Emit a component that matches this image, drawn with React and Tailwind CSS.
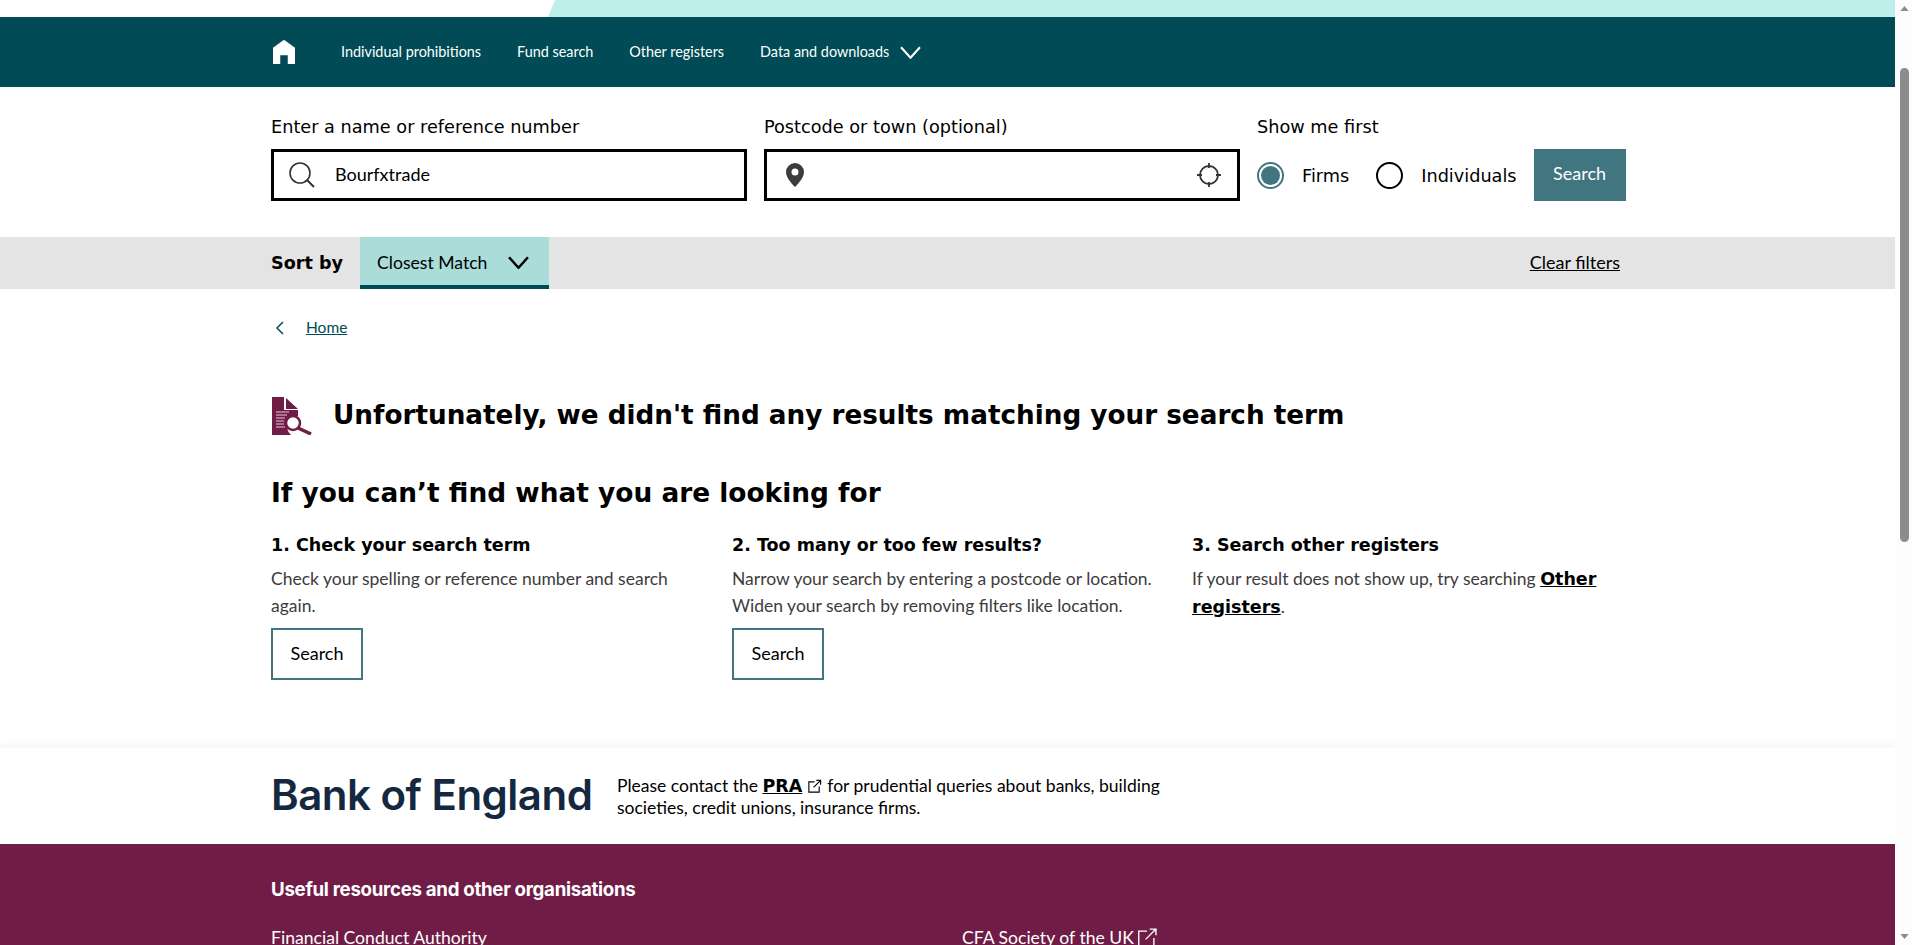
import React from "react";

const dv = "font-['DejaVu_Sans',sans-serif]";
const lato = "font-['Lato',sans-serif]";

const Chevron = ({ className, color = "currentColor", sw = 2 }) => (
  <svg viewBox="0 0 20 12" className={className} fill="none" stroke={color} strokeWidth={sw}>
    <path d="M1 1l9 10 9-10" />
  </svg>
);

const External = ({ className, sw = 1.2 }) => (
  <svg viewBox="0 0 16 16" className={className} fill="none" stroke="currentColor" strokeWidth={sw}>
    <path d="M8 3H2v11h11V8M7 9l7.500-7.500M10 1.500h4.500V6" />
  </svg>
);

const Radio = ({ checked }) => (
  <span className={`flex h-[27px] w-[27px] shrink-0 items-center justify-center rounded-full border-2 ${checked ? "border-[#41757f]" : "border-black"}`}>
    {checked && <span className="h-[19px] w-[19px] rounded-full bg-[#41757f]" />}
  </span>
);

const OutlineButton = () => (
  <button className={`flex h-[52px] w-[92px] items-center justify-center border-2 border-[#41757f] bg-white pb-[2px] text-[18px] text-black ${lato}`}>Search</button>
);

export default function App() {
  return (
    <div className={`flex h-[945px] w-full overflow-hidden bg-white ${lato}`}>
      <div className="min-w-0 flex-1">
        {/* top strip */}
        <div className="flex h-[17px] justify-end">
          <div className="h-full w-[1347px] bg-[#bdefeb] [clip-path:polygon(7px_0,100%_0,100%_100%,0_100%)]" />
        </div>
        {/* nav */}
        <nav className="flex h-[70px] items-center bg-[#004b55] pl-[273px] text-white">
          <svg viewBox="0 0 22 24" className="mr-[46px] h-[24px] w-[22px] shrink-0" fill="#fff">
            <path d="M11 0L22 8V24H15V15H7V24H0V8Z" stroke="#fff" strokeWidth="0.500" strokeLinejoin="round" />
          </svg>
          <div className="flex items-center gap-[36px] text-[14.4px]">
            <span>Individual prohibitions</span>
            <span>Fund search</span>
            <span>Other registers</span>
            <span className="flex items-center gap-[11px]">
              Data and downloads
              <Chevron className="mt-[2px] h-[13px] w-[21px]" />
            </span>
          </div>
        </nav>
        {/* search */}
        <div className={`flex h-[150px] gap-[17px] pl-[271px] pt-[30px] text-black ${dv}`}>
          <div className="w-[476px]">
            <div className="h-[32px] text-[17.7px] leading-[21px]">Enter a name or reference number</div>
            <div className="flex h-[52px] items-center border-[3px] border-black pl-[15px]">
              <svg viewBox="0 0 26 26" className="h-[26px] w-[26px]" fill="none" stroke="#333" strokeWidth="1.600">
                <circle cx="11" cy="11" r="10" />
                <path d="M18 18l7 7" strokeWidth="2" />
              </svg>
              <span className={`ml-[20px] pb-[2px] text-[18px] ${lato}`}>Bourfxtrade</span>
            </div>
          </div>
          <div className="w-[476px]">
            <div className="h-[32px] text-[17.7px] leading-[21px]">Postcode or town (optional)</div>
            <div className="flex h-[52px] items-center justify-between border-[3px] border-black pl-[19px] pr-[16px]">
              <svg viewBox="0 0 18 24" className="h-[24px] w-[18px]" fill="#3c3c3c">
                <path fillRule="evenodd" d="M9 0a9 9 0 0 1 9 9c0 5-5 11-9 15-4-4-9-10-9-15a9 9 0 0 1 9-9zm0 5.500a3.500 3.500 0 1 0 0 7 3.500 3.500 0 0 0 0-7z" />
              </svg>
              <svg viewBox="0 0 24 24" className="h-[24px] w-[24px]" fill="none" stroke="#333" strokeWidth="1.800">
                <circle cx="12" cy="12" r="9" />
                <path d="M12 0v5M12 19v5M0 12h5M19 12h5" />
              </svg>
            </div>
          </div>
          <div className="w-[386px]">
            <div className="h-[32px] text-[17.7px] leading-[21px]">Show me first</div>
            <div className="flex h-[52px] items-center text-[17.7px]">
              <Radio checked />
              <span className="ml-[18px] pt-[2px]">Firms</span>
              <span className="ml-[27px]"><Radio /></span>
              <span className="ml-[18px] pt-[2px]">Individuals</span>
              <button className={`ml-[17px] h-[52px] w-[92px] bg-[#41757f] pb-[4px] text-[18px] text-white ${lato}`}>Search</button>
            </div>
          </div>
        </div>
        {/* sort bar */}
        <div className="flex h-[52px] items-stretch justify-between bg-[#e4e4e4] pl-[271px] pr-[275px] text-black">
          <div className="flex items-stretch">
            <span className={`w-[89px] self-center text-[17.6px] font-bold ${dv}`}>Sort by</span>
            <div className="flex w-[189px] items-center gap-[21px] border-b-4 border-[#004b55] bg-[#aadcd9] pl-[17px] pt-[4px] text-[17.6px]">
              Closest Match
              <Chevron className="mb-[2px] h-[13px] w-[21px]" sw={2.400} />
            </div>
          </div>
          <span className="self-center pb-[2px] text-[18px] underline">Clear filters</span>
        </div>
        {/* main */}
        <main className="h-[459px] pl-[271px] text-black">
          <div className="flex h-[78px] items-center pl-[4px] text-[15.5px] text-[#004b55]">
            <svg viewBox="0 0 10 14" className="mr-[21px] h-[14px] w-[10px]" fill="none" stroke="#004b55" strokeWidth="1.500">
              <path d="M8 1L2 7l6 6" />
            </svg>
            <span className="underline">Home</span>
          </div>
          <div className="mt-[16px] flex h-[68px] items-center gap-[20px] pb-[2px]">
            <svg viewBox="0 0 42 38" className="h-[38px] w-[42px] shrink-0">
              <path d="M1 0H13V13H27V19A11 11 0 0 0 20 38H1Z" fill="#6f1d46" />
              <path d="M15 1L27 12H15Z" fill="#6f1d46" />
              <path d="M5 15H18M5 18H16M5 21H14M5 24H13M5 27H13M5 30H14" stroke="#e8c9d8" strokeWidth="1.200" />
              <circle cx="22" cy="26" r="7" fill="#fff" stroke="#6f1d46" strokeWidth="2.500" />
              <path d="M27 31l13 6" stroke="#6f1d46" strokeWidth="3.500" />
            </svg>
            <h1 className={`text-[26.25px] font-bold ${dv}`}>Unfortunately, we didn't find any results matching your search term</h1>
          </div>
          <h2 className={`mt-[23px] text-[26.4px] leading-[38px] font-bold ${dv}`}>If you can’t find what you are looking for</h2>
          <div className="mt-[21px] flex">
            <section className="w-[461px]">
              <h3 className={`h-[32px] text-[17.5px] leading-[25px] font-bold ${dv}`}>1. Check your search term</h3>
              <p className="w-[440px] text-[17.5px] leading-[27px] text-[#3c3c3c]">Check your spelling or reference number and search again.</p>
              <div className="mt-[9px]"><OutlineButton /></div>
            </section>
            <section className="w-[460px]">
              <h3 className={`h-[32px] text-[17.5px] leading-[25px] font-bold ${dv}`}>2. Too many or too few results?</h3>
              <p className="w-[440px] text-[17.5px] leading-[27px] text-[#3c3c3c]">Narrow your search by entering a postcode or location. Widen your search by removing filters like location.</p>
              <div className="mt-[9px]"><OutlineButton /></div>
            </section>
            <section className="w-[434px]">
              <h3 className={`h-[32px] text-[17.5px] leading-[25px] font-bold ${dv}`}>3. Search other registers</h3>
              <p className="w-[420px] text-[17.5px] leading-[27px] text-[#3c3c3c]">If your result does not show up, try searching <strong className={`font-bold text-black underline ${dv}`}>Other registers</strong>.</p>
            </section>
          </div>
        </main>
        {/* footer */}
        <div className="flex h-[96px] items-start gap-[26px] pl-[271px] pt-[24px] shadow-[0_-4px_6px_rgba(0,0,0,0.04)]">
          <span className="w-[320px] text-[42px] leading-[46px] font-semibold tracking-[-0.5px] whitespace-nowrap text-[#14293f] font-['Inter',sans-serif]">Bank of England</span>
          <p className="w-[560px] pt-[3px] text-[17.5px] leading-[21px] text-black">
            Please contact the <strong className={`font-bold underline ${dv}`}>PRA</strong>
            <External className="mx-[5px] inline h-[15px] w-[15px] align-[-2px]" />
            for prudential queries about banks, building societies, credit unions, insurance firms.
          </p>
        </div>
        <footer className="h-[101px] bg-[#6f1d46] pl-[271px] pt-[34px] text-white">
          <h4 className="text-[18.7px] leading-[24px] font-bold font-['Inter',sans-serif] tracking-[-0.3px]">Useful resources and other organisations</h4>
          <div className="mt-[22px] flex text-[17.6px] leading-[27px]">
            <span className="w-[691px]">Financial Conduct Authority</span>
            <span className="flex items-center gap-[2px]">
              CFA Society of the UK
              <External className="h-[22px] w-[22px]" sw={1} />
            </span>
          </div>
        </footer>
      </div>
      {/* scrollbar */}
      <div className="flex w-[17px] shrink-0 flex-col items-center bg-[#fdfdfd] pl-[2px]">
        <svg viewBox="0 0 10 6" className="mt-[6px] h-[5px] w-[9px]" fill="#8c8c8c"><path d="M5 0l5 6H0z" /></svg>
        <div className="mt-[57px] h-[474px] w-[9px] rounded-[5px] bg-[#8c8c8c]" />
        <div className="flex-1" />
        <svg viewBox="0 0 10 6" className="mb-[6px] h-[5px] w-[9px]" fill="#8c8c8c"><path d="M0 0h10L5 6z" /></svg>
      </div>
    </div>
  );
}
